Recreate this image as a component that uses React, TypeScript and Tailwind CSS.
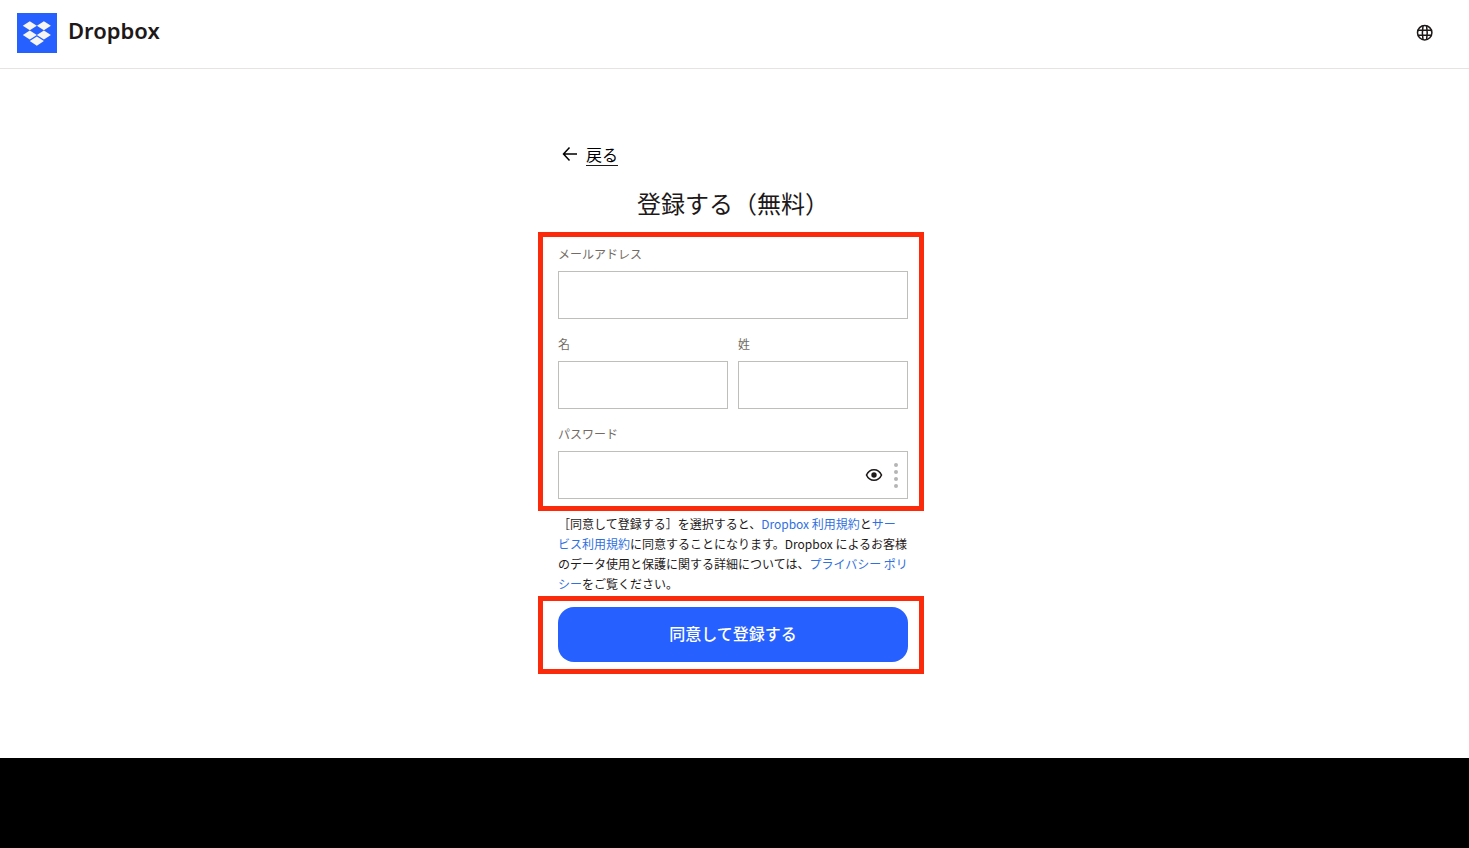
import { useState } from "react";

function DropboxMark() {
  return (
    <svg viewBox="0 0 40 40" className="size-10 bg-[#2660fe]" aria-hidden="true">
      <g fill="#f7f5f2">
        <path d="M12.8 8.2 19.8 12.7 12.8 17.2 5.8 12.7Z" />
        <path d="M26.9 8.2 33.9 12.7 26.9 17.2 19.9 12.7Z" />
        <path d="M12.8 17.5 19.8 22 12.8 26.5 5.8 22Z" />
        <path d="M26.9 17.5 33.9 22 26.9 26.5 19.9 22Z" />
        <path d="M19.85 23.6 26.9 28.1 19.85 32.7 12.8 28.1Z" />
      </g>
    </svg>
  );
}

function GlobeIcon() {
  return (
    <svg viewBox="0 0 24 24" className="size-6" fill="none" stroke="#1e1919" strokeWidth="1.5" aria-hidden="true">
      <circle cx="11.7" cy="11.7" r="7.2" />
      <path d="M4.9 9.3h13.6M4.9 14.3h13.6" />
      <path d="M10 4.8c-.8 4.6-.8 9.2 0 13.8M13.6 4.8c.8 4.6.8 9.2 0 13.8" />
    </svg>
  );
}

function ArrowLeftIcon() {
  return (
    <svg viewBox="0 0 24 24" className="size-6" fill="none" stroke="#000" strokeWidth="1.5" aria-hidden="true">
      <path d="M19 12H5.5M11.5 5.5 5.5 12l6 6.5" />
    </svg>
  );
}

function EyeIcon() {
  return (
    <svg viewBox="0 0 24 24" className="size-6" fill="none" stroke="#1e1919" strokeWidth="1.6" aria-hidden="true">
      <path d="M4.5 12c1.6-3.6 4.2-5.3 7.5-5.3s5.9 1.7 7.5 5.3c-1.6 3.6-4.2 5.3-7.5 5.3S6.1 15.6 4.5 12Z" />
      <circle cx="12" cy="12" r="2.7" fill="#1e1919" stroke="none" />
    </svg>
  );
}

function Field({ id, label, type = "text" }: { id: string; label: string; type?: string }) {
  return (
    <div className="flex min-w-0 flex-1 flex-col gap-[7px]">
      <label htmlFor={id} className="text-xs leading-5 text-[#736c64]">
        {label}
      </label>
      <input id={id} type={type} className="h-12 w-full border border-[#bebebb] bg-white px-3 text-base outline-none" />
    </div>
  );
}

export default function App() {
  const [showPassword, setShowPassword] = useState(false);

  return (
    <div className="flex min-h-screen flex-col bg-white font-['Noto_Sans_CJK_JP',sans-serif] text-[#1e1919]">
      <header className="flex h-[69px] items-center justify-between border-b border-[#e6e4e2] pb-[3px] pl-[17px] pr-8">
        <a href="#" className="flex items-center gap-[11px]">
          <DropboxMark />
          <span className="pb-1.5 font-['Noto_Sans',sans-serif] text-[22px] leading-8 font-semibold">Dropbox</span>
        </a>
        <button type="button" aria-label="言語">
          <GlobeIcon />
        </button>
      </header>

      <main className="flex-1 pt-[73px] pr-[7px]">
        <form className="mx-auto w-[386px]" onSubmit={(e) => e.preventDefault()}>
          <a href="#" className="ml-5 flex w-fit items-center gap-1">
            <ArrowLeftIcon />
            <span className="border-b border-[#1e1919] text-base leading-[22px] text-black">戻る</span>
          </a>
          <h1 className="mt-[17px] mb-[9px] pl-1 text-center text-2xl leading-10 font-normal">登録する（無料）</h1>

          <div className="flex flex-col gap-[15px] border-[5px] border-[#fa2a0a] py-[7px] pr-[11px] pl-[15px]">
            <Field id="email" label="メールアドレス" type="email" />
            <div className="flex gap-[10px]">
              <Field id="first-name" label="名" />
              <Field id="last-name" label="姓" />
            </div>
            <div className="relative">
              <Field id="password" label="パスワード" type={showPassword ? "text" : "password"} />
              <div className="absolute right-[10px] bottom-0 flex h-12 items-center gap-2">
                <button type="button" aria-label="パスワードを表示" onClick={() => setShowPassword(!showPassword)}>
                  <EyeIcon />
                </button>
                <div className="flex flex-col gap-[3px]">
                  <span className="size-1 rounded-full bg-[#b5b5b5]" />
                  <span className="size-1 rounded-full bg-[#b5b5b5]" />
                  <span className="size-1 rounded-full bg-[#b5b5b5]" />
                  <span className="size-1 rounded-full bg-[#b5b5b5]" />
                </div>
              </div>
            </div>
          </div>

          <p className="mt-[3px] mb-0.5 ml-5 w-[351px] text-xs leading-5">
            ［同意して登録する］を選択すると、
            <a href="#" className="text-[#3070e0]">Dropbox 利用規約</a>と
            <a href="#" className="text-[#3070e0]">サー<br />ビス利用規約</a>
            に同意することになります。Dropbox によるお客様
            <br />
            のデータ使用と保護に関する詳細については、
            <a href="#" className="text-[#3070e0]">プライバシー ポリ<br />シー</a>
            をご覧ください。
          </p>

          <div className="border-[5px] border-[#fa2a0a] pt-1.5 pr-[11px] pb-[7px] pl-[15px]">
            <button type="submit" className="h-[55px] w-full rounded-2xl bg-[#2660fe] pb-1 text-base font-medium text-white">
              同意して登録する
            </button>
          </div>
        </form>
      </main>

      <footer className="h-[90px] bg-black" />
    </div>
  );
}
